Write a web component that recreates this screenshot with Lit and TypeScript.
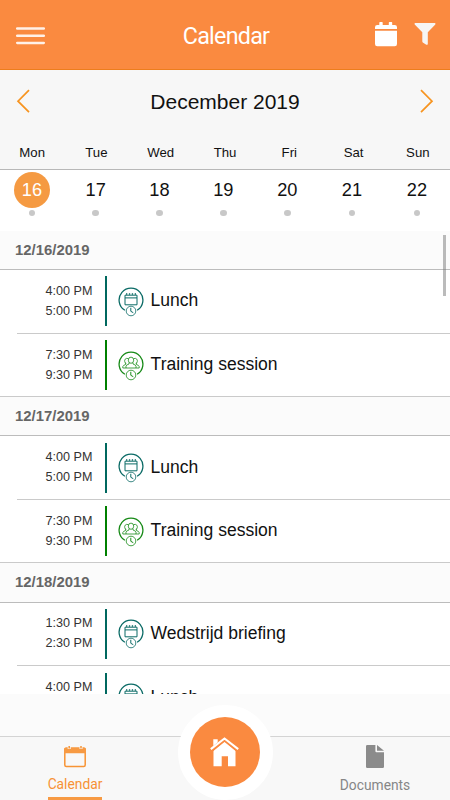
import { LitElement, html, svg, css } from "lit";
import { customElement, property } from "lit/decorators.js";
import { classMap } from "lit/directives/class-map.js";

type Kind = "event" | "training";
interface Entry { start: string; end: string; title: string; kind: Kind; }
interface Day { date: string; entries: Entry[]; }

const lunch: Entry = { start: "4:00 PM", end: "5:00 PM", title: "Lunch", kind: "event" };
const training: Entry = { start: "7:30 PM", end: "9:30 PM", title: "Training session", kind: "training" };

const DAYS: Day[] = [
  { date: "12/16/2019", entries: [lunch, training] },
  { date: "12/17/2019", entries: [lunch, training] },
  {
    date: "12/18/2019",
    entries: [{ start: "1:30 PM", end: "2:30 PM", title: "Wedstrijd briefing", kind: "event" }, lunch],
  },
];

const WEEKDAYS = ["Mon", "Tue", "Wed", "Thu", "Fri", "Sat", "Sun"];
const DATES = [16, 17, 18, 19, 20, 21, 22];

@customElement("event-row")
export class EventRow extends LitElement {
  @property({ attribute: false }) entry!: Entry;
  @property({ type: Boolean }) last = false;

  static styles = css`
    :host { display: block; height: 63.8px; box-sizing: border-box; padding-left: 17px; }
    :host([last]) { padding-left: 0; height: 63.2px; }
    :host([last]) .row { padding-left: 17px; }
    .row { height: 100%; box-sizing: border-box; display: flex; align-items: flex-start; padding-top: 6.2px; border-bottom: 1.5px solid #cacaca; }
    .times { width: 75.5px; text-align: right; font-size: 12.6px; line-height: 20px; padding-top: 4.4px; color: #333; white-space: nowrap; }
    .bar { width: 2.7px; height: 50px; margin-left: 12.3px; background: #00685f; flex: none; }
    .badge { width: 26px; height: 30px; margin: 10.6px 0 0 10.8px; color: #0b6b66; flex: none; display: block; }
    .training .bar { background: #008000; }
    .training .badge { color: #178a17; }
    .title { font-size: 17.55px; line-height: 24px; padding: 12px 0 0 6.3px; color: #111; white-space: nowrap; }
  `;

  private glyph() {
    return this.entry.kind === "event"
      ? svg`<path d="M7 8.2H19V17.8H7Z M7 10.9H19" stroke-width="1"/><path d="M8 7H19" stroke-width="1.6" stroke-dasharray="1.3 1.6"/>`
      : svg`<g stroke-width=".8"><path d="M4.8 17H21.2V15.6Q20.8 14.1 18.3 13.5V11.8M4.8 17V15.6Q5.2 14.1 7.7 13.5V11.8M8 17V15.2Q8.8 13.5 11 13V11.8M18 17V15.2Q17.2 13.5 15 13V11.8"/><ellipse cx="13" cy="9.2" rx="2.7" ry="3.1"/><path d="M10.4 7.6C7.2 6.6 6.4 9 6.7 10.5Q7 12.2 8.2 12.7M15.6 7.6C18.8 6.6 19.6 9 19.3 10.5Q19 12.2 17.8 12.7"/></g>`;
  }

  render() {
    const e = this.entry;
    return html`<div class=${classMap({ row: true, training: e.kind === "training" })}>
      <div class="times"><div>${e.start}</div><div>${e.end}</div></div>
      <div class="bar"></div>
      <svg class="badge" viewBox="0 0 26 30" fill="none" stroke="currentColor">
        <path d="M6.9 23.3A11.9 11.9 0 1 1 19.1 23.3" stroke-width="1.3"/>
        ${this.glyph()}
        <circle cx="13" cy="24" r="4.8" stroke-width=".8"/>
        <path d="M12.8 20.8V24.3L15.3 25.7" stroke-width="1"/>
      </svg>
      <div class="title">${e.title}</div>
    </div>`;
  }
}

@customElement("app-root")
export class AppRoot extends LitElement {
  static styles = css`
    :host { display: flex; flex-direction: column; width: 450px; height: 800px; overflow: hidden; background: #fbfbfb; font-family: "Liberation Sans", Arial, sans-serif; color: #111; }
    svg { display: block; flex: none; }
    .header { height: 70px; box-sizing: border-box; flex: none; background: #fa8a40; border-bottom: 1px solid #ed7d1c; display: grid; grid-template-columns: 1fr auto 1fr; align-items: center; padding: 2px 14px 0 16px; color: #fff; }
    .heading { font: 23.3px/30px Roboto, sans-serif; letter-spacing: -.75px; }
    .actions { display: flex; justify-content: flex-end; gap: 17.5px; align-items: flex-start; padding-bottom: 2.6px; }
    .month { height: 66px; flex: none; background: #f7f7f7; display: flex; align-items: flex-start; justify-content: space-between; padding: 0 16px; }
    .month svg { margin-top: 19px; }
    .month-name { font-size: 21px; line-height: 26px; margin-top: 18.5px; }
    .weekdays { height: 34px; box-sizing: border-box; flex: none; background: #f7f7f7; border-bottom: 1px solid #b8b8b8; display: grid; grid-template-columns: repeat(7, 1fr); text-align: center; font-size: 13.2px; line-height: 34px; }
    .dates { height: 61px; flex: none; background: #fff; display: grid; grid-template-columns: repeat(4, 63.8px) 64.3px 65px 65px; }
    .date { display: flex; flex-direction: column; align-items: center; padding-top: 2px; font-size: 18.2px; }
    .num { width: 36px; height: 36px; border-radius: 50%; line-height: 36px; text-align: center; }
    .num.selected { background: #f59a42; color: #fff; }
    .dot { width: 6.6px; height: 6.4px; border-radius: 50%; background: #c8c8c8; margin-top: 2px; }
    .list { height: 463px; flex: none; background: #fff; overflow: hidden; position: relative; }
    .day { height: 39.2px; box-sizing: border-box; background: #fbfbfb; border-bottom: 1px solid #bcbcbc; padding-left: 15px; font-weight: bold; font-size: 14.9px; line-height: 38px; color: #666; }
    .thumb { position: absolute; right: 3.7px; top: 4px; width: 3.7px; height: 61px; background: rgba(120, 120, 120, .5); }
    .footer { flex: 1; display: flex; flex-direction: column; justify-content: flex-end; position: relative; }
    .tabs { height: 64px; box-sizing: border-box; background: #f8f8f8; border-top: 1px solid #d4d4d4; display: grid; grid-template-columns: repeat(3, 150px); font-family: Roboto, sans-serif; font-size: 13.8px; line-height: 18px; }
    .tab { display: flex; flex-direction: column; align-items: center; color: #868686; }
    .tab.active { color: #f79235; }
    .tab.active svg { margin-top: 8.5px; }
    .tab.active .label { margin-top: 7px; padding-bottom: 4.7px; border-bottom: 3px solid #f79a43; }
    .docs svg { margin-top: 8px; }
    .docs .label { margin-top: 8px; }
    .home { position: absolute; left: 177.5px; top: 10.5px; width: 95px; height: 95px; box-sizing: border-box; border: 12.5px solid #fff; border-radius: 50%; background: #fff; }
    .disc { width: 70px; height: 70px; border-radius: 50%; background: #fa8a40; display: flex; align-items: center; justify-content: center; }
  `;

  render() {
    return html`
      <header class="header">
        <svg width="29" height="18" viewBox="0 0 29 18" stroke="#fff1e8" stroke-width="2.5" stroke-linecap="round"><path d="M1.2 1.5H27.8M1.2 8.7H27.8M1.2 15.9H27.8"/></svg>
        <div class="heading">Calendar</div>
        <div class="actions">
          <svg width="22" height="25" viewBox="0 0 22 25" fill="#fff"><path d="M0 7V5.3Q0 3 2.3 3H4.3V.7Q4.3 0 5 0H7Q7.7 0 7.7 .7V3H13.8V.7Q13.8 0 14.5 0H16.5Q17.2 0 17.2 .7V3H19.7Q22 3 22 5.3V7ZM0 8.7H22V22Q22 24.3 19.7 24.3H2.3Q0 24.3 0 22Z"/></svg>
          <svg width="22" height="24" viewBox="0 0 22 24" fill="#f7f5f4"><path d="M1.2 1H20.8Q22 1.2 21.3 2.5L13.8 10.3V22Q13.5 23.2 12.3 22.7L8.8 20.4Q8.3 20 8.3 19.2V10.3L.7 2.5Q0 1.2 1.2 1Z"/></svg>
        </div>
      </header>
      <div class="month">
        <svg width="15" height="25" viewBox="0 0 15 25" fill="none" stroke="#f79420" stroke-width="1.7"><path d="M13 1.2L2 12.2L13 23.2"/></svg>
        <div class="month-name">December 2019</div>
        <svg width="15" height="25" viewBox="0 0 15 25" fill="none" stroke="#f79420" stroke-width="1.7"><path d="M2 1.2L13 12.2L2 23.2"/></svg>
      </div>
      <div class="weekdays">${WEEKDAYS.map((d) => html`<div>${d}</div>`)}</div>
      <div class="dates">${DATES.map((d) => html`<div class="date"><div class=${classMap({ num: true, selected: d === 16 })}>${d}</div><div class="dot"></div></div>`)}</div>
      <main class="list">
        ${DAYS.map((d) => html`<div class="day">${d.date}</div>${d.entries.map((e, i) => html`<event-row .entry=${e} ?last=${i === d.entries.length - 1}></event-row>`)}`)}
        <div class="thumb"></div>
      </main>
      <footer class="footer">
        <nav class="tabs">
          <div class="tab active">
            <svg width="22" height="22" viewBox="0 0 22 22"><rect x=".8" y="2.2" width="20.4" height="18.2" rx="1.5" fill="none" stroke="#f79435" stroke-width="1.5"/><path d="M0 7.2V3.4Q0 1.6 1.8 1.6H20.2Q22 1.6 22 3.4V7.2Z" fill="#f79a43"/><path d="M5.2 0V3M17 0V3" stroke="#f8f8f8" stroke-width="3"/><path d="M5.2 0V2.6M17 0V2.6" stroke="#f79a43" stroke-width="1.6"/></svg>
            <div class="label">Calendar</div>
          </div>
          <div></div>
          <div class="tab docs">
            <svg width="18" height="23" viewBox="0 0 18 23" fill="#8b8b8b"><path d="M1.3 0H9.4V6.2Q9.4 7.2 10.4 7.2H18V21.7Q18 23 16.7 23H1.3Q0 23 0 21.7V1.3Q0 0 1.3 0ZM11 0L18 5.7H11Z"/></svg>
            <div class="label">Documents</div>
          </div>
        </nav>
        <div class="home"><div class="disc">
          <svg width="29" height="30" viewBox="0 0 29 30"><path d="M3.3 2.2H7.7V6L3.3 10Z M14.5 4.2L25.5 13.7V29.2H18V19.2H11.7V29.2H3.5V13.7Z" fill="#fff"/><path d="M.8 13.4L14.5 2.5L28.2 13.4" fill="none" stroke="#fa8a40" stroke-width="3.8"/><path d="M.8 12.2L14.5 1.5L28.2 12.2" fill="none" stroke="#fff" stroke-width="2.1"/></svg>
        </div></div>
      </footer>
    `;
  }
}
